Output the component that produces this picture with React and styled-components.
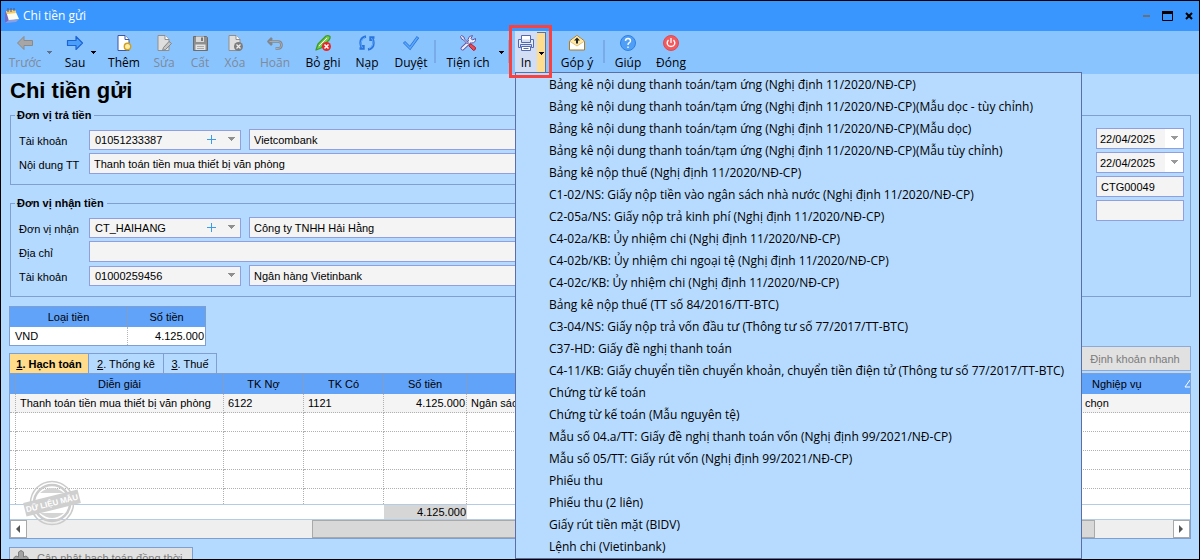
import React from "react";
import styled, { createGlobalStyle, css } from "styled-components";

const ui = `"Open Sans", "Noto Sans", sans-serif`;
const form = `"Liberation Sans", Arial, sans-serif`;
const line = "#7f9fd3";
const fieldLine = "#8f9fe0";

const Global = createGlobalStyle`
  *, *::before, *::after { box-sizing: border-box; }
  body { margin: 0; font: 11px/14px ${form}; color: #000; }
  button, input, select { font: inherit; color: inherit; margin: 0; border-radius: 0; }
  button { padding: 0; border: 0; background: none; }
  table { border-collapse: collapse; }
`;

const Window = styled.div`
  display: flex;
  flex-direction: column;
  height: 100vh;
  overflow: hidden;
  border: 1px solid #000;
  background: #b5daff;
`;

const TitleBar = styled.header`
  display: flex;
  align-items: center;
  flex: none;
  height: 30px;
  padding-left: 3px;
  gap: 4px;
  background: #3896fe;
  color: #fff;
  font-family: ${ui};
  font-size: 12px;
`;
const TitleText = styled.span`flex: 1;`;
const WindowButtons = styled.div`display: flex;`;
const WindowButton = styled.button`
  display: flex;
  align-items: center;
  justify-content: center;
  width: 21px;
  height: 20px;
`;

const Toolbar = styled.nav`
  display: flex;
  flex: none;
  height: 43px;
  padding-left: 4px;
  background: #8ac4ff;
  font-family: ${ui};
  font-size: 12px;
  position: relative;
`;
const ToolButton = styled.button`
  display: flex;
  flex-direction: column;
  align-items: center;
  flex: none;
  width: ${(p) => p.$w}px;
  padding-top: 3px;
  gap: 4px;
  white-space: nowrap;
  color: ${(p) => (p.disabled ? "#7e8a99" : "#000")};
  svg { flex: none; }
`;
const CaretButton = styled.button`
  display: flex;
  align-items: center;
  justify-content: center;
  flex: none;
  width: 8px;
  margin-right: ${(p) => p.$space || 0}px;
  color: ${(p) => (p.disabled ? "#5f7186" : "#000")};
`;
const Divider = styled.span`
  flex: none;
  width: 2px;
  height: 23px;
  margin: 9px 3px 0;
  background: #79abe8;
`;
const SplitButton = styled.div`
  display: flex;
  flex: none;
  position: relative;
  height: 42px;
  margin-left: 2px;
  background: #d3ddf3;
  ${CaretButton} {
    width: 9px;
    margin-top: 1px;
    background: #ffdd8e;
    border-top: 1px solid #5a6fa5;
    border-right: 1px solid #5a6fa5;
  }
`;
const Highlight = styled.span`
  position: absolute;
  inset: -6px -6px -5px -6px;
  border: 3px solid #f9423f;
  pointer-events: none;
  z-index: 3;
`;
const Menu = styled.div`
  position: absolute;
  top: 41px;
  left: 514px;
  width: 567px;
  padding-top: 1px;
  border: 1px solid #5a6fa5;
  background: #b7dbfe;
  z-index: 2;
`;
const MenuItem = styled.button`
  display: block;
  width: 100%;
  height: 22px;
  padding-left: 33px;
  text-align: left;
  white-space: nowrap;
`;

const Page = styled.main`
  display: flex;
  flex-direction: column;
  flex: 1;
  min-height: 0;
  padding: 4px 8px 0;
`;
const Heading = styled.h1`
  margin: 0 0 5px 1px;
  font-size: 22px;
  line-height: 25px;
`;
const FormArea = styled.div`
  display: grid;
  grid-template-columns: minmax(0, 1fr) minmax(0, 460px);
  gap: 8px;
  padding-left: 1px;
`;
const Groups = styled.div`
  display: flex;
  flex-direction: column;
  gap: 11px;
`;
const Group = styled.fieldset`
  display: flex;
  flex-direction: column;
  gap: 3px;
  min-width: 0;
  margin: 0;
  padding: 7px 6px 10px 8px;
  border: 1px solid ${line};
`;
const GroupTitle = styled.legend`
  margin-left: -4px;
  padding: 0 3px 0 2px;
  font-weight: 700;
  line-height: 14px;
`;
const SideGroup = styled(Group)`
  align-items: flex-end;
  margin-top: 7px;
  padding-top: 12px;
`;
const Row = styled.div`
  display: grid;
  grid-template-columns: 70px ${(p) => (p.$pair ? "152px minmax(0, 1fr)" : "minmax(0, 1fr)")};
  align-items: center;
  height: 21px;
`;
const Label = styled.label`
  padding-top: 3px;
  white-space: nowrap;
`;
const boxed = css`
  border: 1px solid ${fieldLine};
  background: #f4f4f4;
`;
const TextField = styled.input`
  ${boxed}
  width: 100%;
  height: 21px;
  padding: 0 4px;
`;
const PairField = styled(TextField)`
  width: auto;
  margin-left: 8px;
`;
const ShortField = styled(TextField)`width: 88px;`;
const Combo = styled.div`
  ${boxed}
  display: flex;
  align-items: center;
  position: relative;
  height: 20px;
  select {
    appearance: none;
    flex: 1;
    min-width: 0;
    height: 18px;
    border: 0;
    padding: 0 18px 0 5px;
    background: transparent;
  }
  > svg { position: absolute; right: 4px; pointer-events: none; }
`;
const AddButton = styled.button`
  display: flex;
  position: absolute;
  right: 24px;
`;
const DateBox = styled.div`
  ${boxed}
  display: flex;
  width: 88px;
  height: 21px;
  input { flex: 1; min-width: 0; border: 0; padding: 0 0 0 3px; background: transparent; }
  button { display: flex; align-items: center; justify-content: center; width: 18px; background: #fff; }
`;

const MoneyTable = styled.table`
  width: 197px;
  margin-top: 9px;
  border: 1px solid ${line};
  background: #fff;
  th { height: 20px; padding: 0; background: #62a3fa; font-weight: 400; border-right: 1px solid #7f9fc9; }
  td { height: 19px; padding: 0 1px 0 5px; border-right: 1px dotted #b5b5b5; }
  td:last-child { text-align: right; border-right: 0; }
`;
const TabRow = styled.div`
  display: flex;
  justify-content: space-between;
  align-items: flex-end;
  height: 27px;
`;
const Tabs = styled.div`display: flex;`;
const Tab = styled.button`
  width: ${(p) => p.$w}px;
  height: 20px;
  white-space: nowrap;
  border: 1px solid ${line};
  border-bottom: 0;
  border-left-width: ${(p) => (p.$on ? 1 : 0)}px;
  background: ${(p) => (p.$on ? "#ffdb8c" : "#b5daff")};
  font-weight: ${(p) => (p.$on ? 700 : 400)};
`;
const QuickButton = styled.button`
  width: 112px;
  height: 25px;
  margin-bottom: 2px;
  border: 1px solid #8fa9d6;
  background: #e1e1e1;
  color: #7b7b7b;
`;

const GridBox = styled.div`
  flex: none;
  border: 1px solid ${line};
  background: #fff;
`;
const Grid = styled.table`
  width: 100%;
  table-layout: fixed;
  border-collapse: separate;
  border-spacing: 0;
  th, td { padding: 0 1px 0 4px; white-space: nowrap; overflow: hidden; text-align: left; }
  th {
    height: 20px;
    padding: 0;
    background: #62a3fa;
    font-weight: 400;
    text-align: center;
    border-right: 1px solid #7f9fc9;
  }
  td { border-right: 1px dotted #b0b0b0; }
  tbody td { height: 19px; border-bottom: 1px dotted #b0b0b0; }
  tbody tr:first-child td { background: #f4f4f4; }
  tbody tr:last-child td { height: 15px; border-bottom: 0; }
  tfoot td {
    height: 16px;
    border: solid #b4cbe3;
    border-width: 1px 0;
  }
  th:last-child, td:last-child { border-right: 0; }
  td:last-child { padding-left: 7px; }
`;
const Amount = styled.td`
  && { text-align: right; }
`;
const TotalCell = styled(Amount)`
  && { background: #d6d6d6; }
`;
const SortHead = styled.div`
  display: flex;
  align-items: center;
  justify-content: space-between;
  padding-left: 14px;
`;
const ScrollBar = styled.div`
  display: flex;
  height: 18px;
  background: #efefef;
`;
const ScrollButton = styled.button`
  display: flex;
  align-items: center;
  justify-content: center;
  flex: none;
  width: 17px;
  border: 1px solid #a9a9a9;
  background: #fff;
`;
const Track = styled.div`
  display: grid;
  grid-template-columns: 285fr 784fr 78fr;
  flex: 1;
`;
const Thumb = styled.div`
  grid-column: 2;
  border: 1px solid #a9a9a9;
  background: #d8d8d8;
`;
const SyncButton = styled.button`
  display: flex;
  align-items: center;
  flex: none;
  gap: 8px;
  width: 184px;
  height: 22px;
  margin-top: 8px;
  padding-left: 3px;
  border: 1px solid ${line};
  background: #e1e1e1;
  color: #7b7b7b;
  white-space: nowrap;
  svg { flex: none; }
`;
const GridWrap = styled.div`position: relative;`;
const Stamp = styled.svg`
  position: absolute;
  left: 12px;
  bottom: 11px;
  pointer-events: none;
`;

const Caret = ({ small, color = "currentColor" }) =>
  small ? (
    <svg width="5" height="3" viewBox="0 0 5 3" shapeRendering="crispEdges"><path d="M0 0H5L2.500 3Z" fill={color} /></svg>
  ) : (
    <svg width="9" height="5" viewBox="0 0 9 5" shapeRendering="crispEdges"><path d="M1 0H8L4.500 4Z" fill={color} /></svg>
  );
const Ico = ({ children, ...p }) => (
  <svg width="18" height="18" viewBox="0 0 18 18" fill="none" strokeLinejoin="round" {...p}>{children}</svg>
);
const Sheet = ({ stroke, fill }) => (
  <>
    <path d="M3 1.500H10L14 5.500V16.500H3Z" fill={fill} stroke={stroke} />
    <path d="M10 1.500V5.500H14" stroke={stroke} fill="#fff" />
  </>
);

const icons = {
  back: <Ico><path d="M1.500 9L8 2.500V6.500H16.500V11.500H8V15.500Z" fill="#a6a6a6" stroke="#8a8a8a" /></Ico>,
  next: <Ico><path d="M16.500 9L10 2.500V6.500H1.500V11.500H10V15.500Z" fill="#4aa0f8" stroke="#1f62d4" strokeWidth="1.200" /></Ico>,
  add: <Ico><Sheet stroke="#3d57a0" fill="#fff" /><circle cx="12.500" cy="12.500" r="3.200" fill="#ffeea4" stroke="#cfa022" strokeWidth="1.400" /></Ico>,
  edit: <Ico><Sheet stroke="#8f8f8f" fill="#dedede" /><path d="M7.500 16.500L8.500 13.500L14 7.500L16.500 9.500L10.500 15.500Z" fill="#c4c4c4" stroke="#858585" /></Ico>,
  save: <Ico><path d="M2.500 2.500H15.500L16.500 3.500V16.500H2.500Z" fill="#8f8f8f" stroke="#6d6d6d" /><path d="M5 2.500H13V8H5Z" fill="#d9d9d9" /><path d="M10 3.500H12V7H10Z" fill="#777" /><path d="M4.500 10.500H14.500V16H4.500Z" fill="#e4e4e4" /><path d="M6 12.500H13M6 14.500H13" stroke="#aaa" /></Ico>,
  remove: <Ico><Sheet stroke="#8f8f8f" fill="#dedede" /><circle cx="12.500" cy="12.500" r="4.500" fill="#7d7d7d" /><path d="M10.500 10.500L14.500 14.500M14.500 10.500L10.500 14.500" stroke="#eee" strokeWidth="1.300" /></Ico>,
  undo: <Ico><path d="M6 4L2.500 7.500L6 11M2.500 7.500H12Q15.500 7.500 15.500 11T12 14.500H9.500" stroke="#80878f" strokeWidth="2.600" /><path d="M3.500 7.500H12Q15.500 7.500 15.500 11T12 14.500H9.500" stroke="#a9adb2" strokeWidth="1" /></Ico>,
  unpost: <Ico><path d="M2 16L4 10L12 2Q14 1 16 2.500Q16.500 4 15 6L7 14Z" fill="#7ad04d" stroke="#3d9a2a" strokeWidth="1.300" /><path d="M5 12L13 4" stroke="#fff" /><circle cx="12.500" cy="12.500" r="4.500" fill="#e62828" /><path d="M10.500 10.500L14.500 14.500M14.500 10.500L10.500 14.500" stroke="#fff" strokeWidth="1.500" /></Ico>,
  reload: <Ico><path d="M8 2.500Q2.500 3.500 2.500 9Q2.500 12 4.500 14.500M1.500 14.500H5.500V11M10 15.500Q15.500 14.500 15.500 9Q15.500 6 13.500 3.500M16.500 3.500H12.500V7" stroke="#2a74de" strokeWidth="2.400" strokeLinejoin="miter" /><path d="M7 3.500Q3 5 3 9Q3 11.500 4.500 14M11 14.500Q15 13 15 9Q15 6.500 13.500 4" stroke="#64adf8" strokeWidth="1" /></Ico>,
  approve: <Ico><path d="M2 8L8 14L16 3" stroke="#2a74de" strokeWidth="3" strokeLinejoin="miter" /><path d="M2.500 8.500L8 14L15.500 3.500" stroke="#5aa9fa" strokeWidth="1.500" strokeLinejoin="miter" /></Ico>,
  tools: <Ico><path d="M3.500 14.500L11.500 7" stroke="#5f56a3" strokeWidth="4" strokeLinecap="round" /><path d="M13.500 1.500L12 4.500L13.500 6L16.500 4.500Q17 9 12.500 9Q9 8.500 9 5.500Q9.500 1.500 13.500 1.500Z" fill="#efeffc" stroke="#5f56a3" /><path d="M3.500 14.500L11 7.500" stroke="#efeffc" strokeWidth="2.200" strokeLinecap="round" /><path d="M1.500 2.500L2.500 1.500L5 3L5.500 5L9.500 9L8.500 10L4.500 6L2.500 5Z" fill="#e3e1f7" stroke="#5f56a3" /><path d="M10 12Q10 10 12 10L16.500 13.500Q17 16 14.500 16.500Z" fill="#e64a55" stroke="#ad2233" /></Ico>,
  print: <Ico stroke="#5269b0"><path d="M4.500 5.500V1.500H13.500V5.500" fill="#fff" /><path d="M1.500 5.500H4.500V8.500H13.500V5.500H16.500V13.500H14.500V10.500H3.500V13.500H1.500Z" fill="#e6edfb" /><path d="M4.500 12.500H13.500V16.500H4.500Z" fill="#fff" /><path d="M6.500 14.500H11.500" /></Ico>,
  suggest: <Ico><path d="M1.500 7L9 1.500L16.500 7V16H1.500Z" fill="#fff" stroke="#b17b1e" /><path d="M2.500 7L9 2L15.500 7L9 11.500Z" fill="#ffe9a0" /><path d="M1.500 7L9 12L16.500 7" stroke="#e2bd6c" /><path d="M9 9.500V5" stroke="#222" strokeWidth="2" /><path d="M6 6.500L9 3.500L12 6.500Z" fill="#222" /></Ico>,
  help: <Ico><circle cx="9" cy="9" r="7.500" fill="#4f9ff7" stroke="#2f80e4" /><path d="M6.500 7Q6.500 4.500 9 4.500T11.500 7Q11.500 8 10 9Q9 9.500 9 11M9 12.500V14" stroke="#fff" strokeWidth="1.400" /></Ico>,
  close: <Ico><circle cx="9" cy="9" r="7.500" fill="#f25a5e" stroke="#e04a52" /><path d="M6.500 6Q4.500 8 5.500 10.500Q6.500 12.500 9 12.500T12.500 10.500Q13.500 8 11.500 6M9 4V9" stroke="#fff" strokeWidth="1.300" /></Ico>,
};

const Tool = ({ icon, children, w, disabled }) => (
  <ToolButton $w={w} disabled={disabled}>{icons[icon]}{children}</ToolButton>
);

const prints = [
  "Bảng kê nội dung thanh toán/tạm ứng (Nghị định 11/2020/NĐ-CP)",
  "Bảng kê nội dung thanh toán/tạm ứng (Nghị định 11/2020/NĐ-CP)(Mẫu dọc - tùy chỉnh)",
  "Bảng kê nội dung thanh toán/tạm ứng (Nghị định 11/2020/NĐ-CP)(Mẫu dọc)",
  "Bảng kê nội dung thanh toán/tạm ứng (Nghị định 11/2020/NĐ-CP)(Mẫu tùy chỉnh)",
  "Bảng kê nộp thuế (Nghị định 11/2020/NĐ-CP)",
  "C1-02/NS: Giấy nộp tiền vào ngân sách nhà nước (Nghị định 11/2020/NĐ-CP)",
  "C2-05a/NS: Giấy nộp trả kinh phí (Nghị định 11/2020/NĐ-CP)",
  "C4-02a/KB: Ủy nhiệm chi (Nghị định 11/2020/NĐ-CP)",
  "C4-02b/KB: Ủy nhiệm chi ngoại tệ (Nghị định 11/2020/NĐ-CP)",
  "C4-02c/KB: Ủy nhiệm chi (Nghị định 11/2020/NĐ-CP)",
  "Bảng kê nộp thuế (TT số 84/2016/TT-BTC)",
  "C3-04/NS: Giấy nộp trả vốn đầu tư (Thông tư số 77/2017/TT-BTC)",
  "C37-HD: Giấy đề nghị thanh toán",
  "C4-11/KB: Giấy chuyển tiền chuyển khoản, chuyển tiền điện tử (Thông tư số 77/2017/TT-BTC)",
  "Chứng từ kế toán",
  "Chứng từ kế toán (Mẫu nguyên tệ)",
  "Mẫu số 04.a/TT: Giấy đề nghị thanh toán vốn (Nghị định 99/2021/NĐ-CP)",
  "Mẫu số 05/TT: Giấy rút vốn (Nghị định 99/2021/NĐ-CP)",
  "Phiếu thu",
  "Phiếu thu (2 liên)",
  "Giấy rút tiền mặt (BIDV)",
  "Lệnh chi (Vietinbank)",
];

const Select = ({ id, value, add }) => (
  <Combo>
    <select id={id} defaultValue={value}><option>{value}</option></select>
    {add && (
      <AddButton>
        <svg width="9" height="9" viewBox="0 0 9 9"><path d="M4.500 0V9M0 4.500H9" stroke="#3b9be6" /></svg>
      </AddButton>
    )}
    <Caret color="#8f8f8f" />
  </Combo>
);
const DateField = ({ value }) => (
  <DateBox>
    <input defaultValue={value} />
    <button><Caret color="#9a9a9a" /></button>
  </DateBox>
);

export default function App() {
  return (
    <Window>
      <Global />
      <TitleBar>
        <svg width="15" height="16" viewBox="0 0 15 16">
          <path d="M1 4L3 2L5 13L1 15Z" fill="#7468c4" />
          <path d="M2 3L11 2L15 11L5 13Z" fill="#fbfbf0" />
          <path d="M2 3L11 2L12 5L3 6Z" fill="#f4ca62" />
          <path d="M1 15L5 12L15 11L12 14Z" fill="#8c9fe2" />
          <path d="M4 0V4M7 0V4M10 0V3" stroke="#5a5470" />
        </svg>
        <TitleText>Chi tiền gửi</TitleText>
        <WindowButtons>
          <WindowButton><svg width="7" height="2"><path d="M0 0H7V2H0Z" fill="#6b6f78" /></svg></WindowButton>
          <WindowButton><svg width="11" height="10"><path d="M.5 .5H10.500V9.500H.5Z" fill="none" stroke="#000" /><path d="M0 0H11V3H0Z" /></svg></WindowButton>
          <WindowButton><svg width="8" height="8"><path d="M1 1L7 7M7 1L1 7" stroke="#000" strokeWidth="2" /></svg></WindowButton>
        </WindowButtons>
      </TitleBar>

      <Toolbar>
        <Tool icon="back" w={40} disabled>Trước</Tool>
        <CaretButton disabled $space={8}><Caret small /></CaretButton>
        <Tool icon="next" w={28}>Sau</Tool>
        <CaretButton><Caret small /></CaretButton>
        <Tool icon="add" w={54}>Thêm</Tool>
        <Tool icon="edit" w={26} disabled>Sửa</Tool>
        <Tool icon="save" w={46} disabled>Cất</Tool>
        <Tool icon="remove" w={24} disabled>Xóa</Tool>
        <Tool icon="undo" w={56} disabled>Hoãn</Tool>
        <Tool icon="unpost" w={40}>Bỏ ghi</Tool>
        <Tool icon="reload" w={48}>Nạp</Tool>
        <Tool icon="approve" w={40}>Duyệt</Tool>
        <Divider />
        <Tool icon="tools" w={58}>Tiện ích</Tool>
        <CaretButton><Caret small /></CaretButton>
        <Divider />
        <SplitButton>
          <Tool icon="print" w={22}>In</Tool>
          <CaretButton><Caret small /></CaretButton>
          <Highlight />
        </SplitButton>
        <Divider />
        <Tool icon="suggest" w={46}>Góp ý</Tool>
        <Divider />
        <Tool icon="help" w={40}>Giúp</Tool>
        <Tool icon="close" w={46}>Đóng</Tool>
        <Menu role="menu">
          {prints.map((p) => <MenuItem role="menuitem" key={p}>{p}</MenuItem>)}
        </Menu>
      </Toolbar>

      <Page>
        <Heading>Chi tiền gửi</Heading>
        <FormArea>
          <Groups>
            <Group>
              <GroupTitle>Đơn vị trả tiền</GroupTitle>
              <Row $pair>
                <Label htmlFor="payer">Tài khoản</Label>
                <Select id="payer" value="01051233387" add />
                <PairField defaultValue="Vietcombank" />
              </Row>
              <Row>
                <Label htmlFor="content">Nội dung TT</Label>
                <TextField id="content" defaultValue="Thanh toán tiền mua thiết bị văn phòng" />
              </Row>
            </Group>
            <Group>
              <GroupTitle>Đơn vị nhận tiền</GroupTitle>
              <Row $pair>
                <Label htmlFor="payee">Đơn vị nhận</Label>
                <Select id="payee" value="CT_HAIHANG" add />
                <PairField defaultValue="Công ty TNHH Hải Hằng" />
              </Row>
              <Row>
                <Label htmlFor="address">Địa chỉ</Label>
                <TextField id="address" />
              </Row>
              <Row $pair>
                <Label htmlFor="account">Tài khoản</Label>
                <Select id="account" value="01000259456" />
                <PairField defaultValue="Ngân hàng Vietinbank" />
              </Row>
            </Group>
          </Groups>
          <SideGroup>
            <DateField value="22/04/2025" />
            <DateField value="22/04/2025" />
            <ShortField defaultValue="CTG00049" />
            <ShortField />
          </SideGroup>
        </FormArea>

        <MoneyTable>
          <colgroup><col width="118" /><col /></colgroup>
          <thead><tr><th>Loại tiền</th><th>Số tiền</th></tr></thead>
          <tbody><tr><td>VND</td><td>4.125.000</td></tr></tbody>
        </MoneyTable>

        <TabRow>
          <Tabs role="tablist">
            <Tab role="tab" $on $w={80}><u>1</u>. Hạch toán</Tab>
            <Tab role="tab" $w={75}><u>2</u>. Thống kê</Tab>
            <Tab role="tab" $w={53}><u>3</u>. Thuế</Tab>
          </Tabs>
          <QuickButton>Định khoản nhanh</QuickButton>
        </TabRow>

        <GridWrap>
          <GridBox>
            <Grid>
              <colgroup>
                <col width="6" /><col width="208" /><col width="80" /><col width="80" /><col width="83" /><col /><col width="112" />
              </colgroup>
              <thead>
                <tr>
                  <th /><th>Diễn giải</th><th>TK Nợ</th><th>TK Có</th><th>Số tiền</th><th />
                  <th>
                    <SortHead>
                      Nghiệp vụ
                      <svg width="6" height="8" viewBox="0 0 6 8"><path d="M6 0L1 7H6" fill="none" stroke="#fff" /></svg>
                    </SortHead>
                  </th>
                </tr>
              </thead>
              <tbody>
                <tr>
                  <td /><td>Thanh toán tiền mua thiết bị văn phòng</td><td>6122</td><td>1121</td>
                  <Amount>4.125.000</Amount><td>Ngân sách</td><td>chọn</td>
                </tr>
                {[1, 2, 3, 4, 5].map((r) => (
                  <tr key={r}><td /><td /><td /><td /><td /><td /><td /></tr>
                ))}
              </tbody>
              <tfoot>
                <tr><td /><td /><td /><td /><TotalCell>4.125.000</TotalCell><td /><td /></tr>
              </tfoot>
            </Grid>
            <ScrollBar>
              <ScrollButton><svg width="5" height="8"><path d="M4 0V8L0 4Z" fill="#555" /></svg></ScrollButton>
              <Track><Thumb /></Track>
              <ScrollButton><svg width="5" height="8"><path d="M0 0V8L4 4Z" fill="#555" /></svg></ScrollButton>
            </ScrollBar>
          </GridBox>
          <Stamp width="62" height="50" viewBox="0 0 62 50" fill="none" stroke="#cbcbcb">
            <circle cx="31" cy="25" r="21.500" strokeWidth="1.500" />
            <circle cx="31" cy="25" r="18" strokeWidth="2.500" />
            <path d="M19 15Q31 5 43 15ZM19 35Q31 45 43 35Z" fill="#d4d4d4" stroke="none" />
            <g transform="rotate(-14 31 25)">
              <path d="M3 18H59V32H3Z" fill="#cfcfcf" stroke="none" />
              <text x="31" y="28" fill="#fff" stroke="none" fontSize="8" fontWeight="700" textAnchor="middle" fontFamily="Liberation Sans">DỮ LIỆU MẪU</text>
            </g>
          </Stamp>
        </GridWrap>

        <SyncButton>
          <svg width="16" height="18" viewBox="0 0 16 18">
            <path d="M5.500 3Q8 0 10.500 3V8L13 7L15.500 9L8 16.500L.5 9L3 7L5.500 8Z" fill="#a3a3a3" stroke="#7d7d7d" />
          </svg>
          Cập nhật hạch toán đồng thời
        </SyncButton>
      </Page>
    </Window>
  );
}
